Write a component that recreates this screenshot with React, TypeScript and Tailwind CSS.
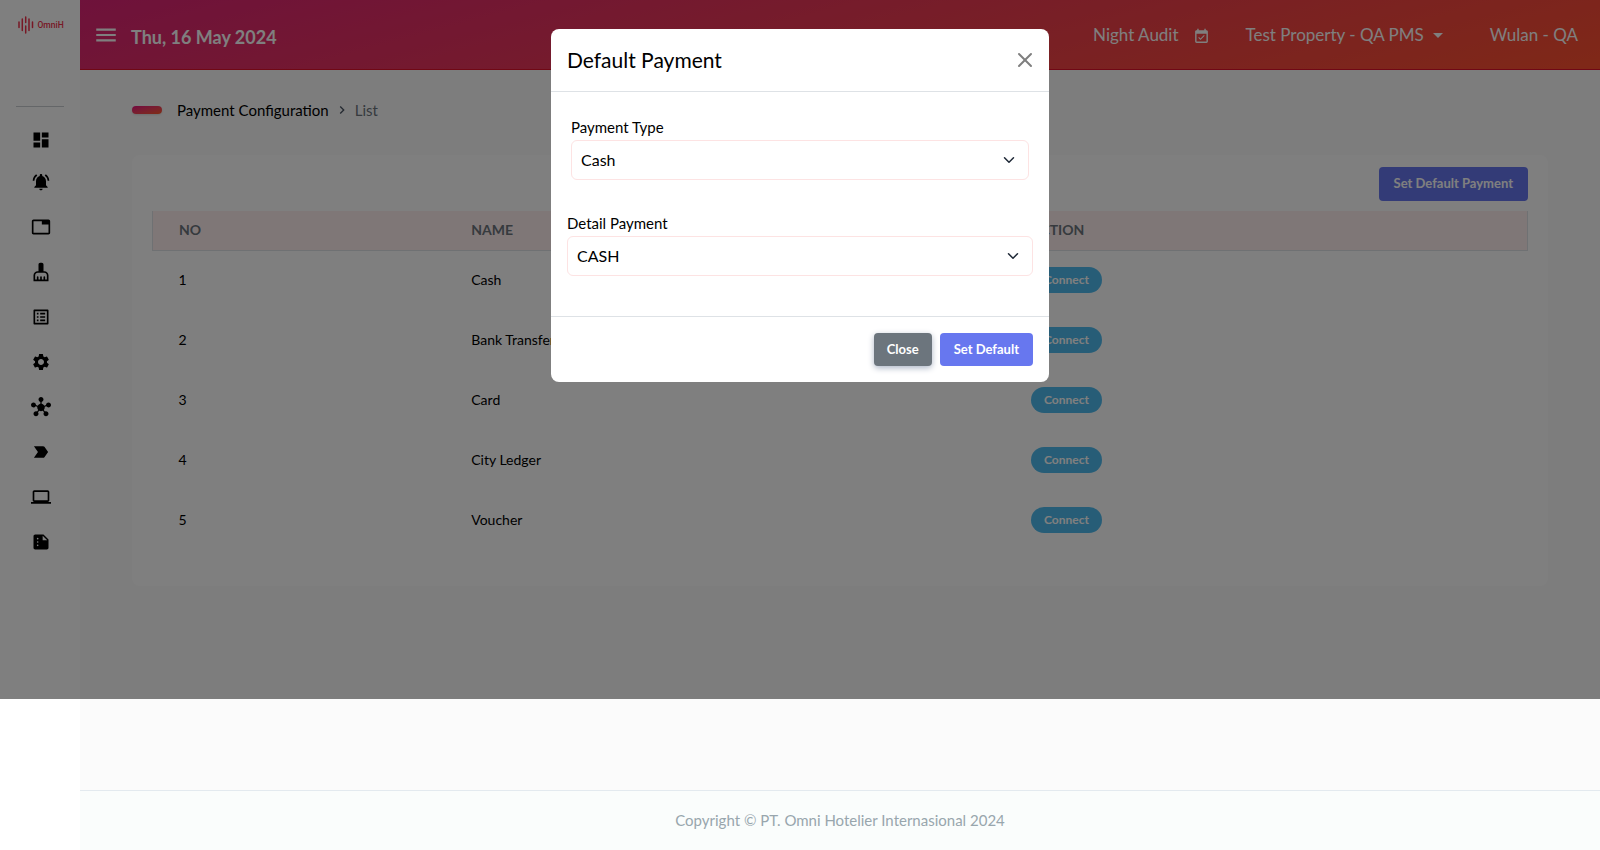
import { useState } from "react";
import { FiX } from "react-icons/fi";
import {
  MdArrowDropDown,
  MdChevronRight,
  MdCleaningServices,
  MdDashboard,
  MdEventAvailable,
  MdHub,
  MdLabelImportant,
  MdMenu,
  MdNotificationsActive,
  MdOutlineComputer,
  MdOutlineListAlt,
  MdOutlineTab,
  MdSettings,
  MdSummarize,
} from "react-icons/md";

const menuItems = [
  { label: "Dashboard", Icon: MdDashboard },
  { label: "Notifications", Icon: MdNotificationsActive },
  { label: "Front Office", Icon: MdOutlineTab },
  { label: "Housekeeping", Icon: MdCleaningServices },
  { label: "Reports", Icon: MdOutlineListAlt },
  { label: "Settings", Icon: MdSettings },
  { label: "Channels", Icon: MdHub },
  { label: "Labels", Icon: MdLabelImportant },
  { label: "System", Icon: MdOutlineComputer },
  { label: "Summary", Icon: MdSummarize },
];

const payments = ["Cash", "Bank Transfer", "Card", "City Ledger", "Voucher"];

const Logo = () => (
  <svg viewBox="0 0 48 18" className="h-[18px] w-12" role="img" aria-label="OmniH">
    <g stroke="#f0304a" strokeWidth="1.5" strokeLinecap="round">
      <path d="M3 6v5.500M6.300 3v11.500M9.700 1v5.500M9.700 10v7M13 3v11.500M16.500 6v5.500" />
    </g>
    <text x="21.500" y="12" fontSize="8.500" fontWeight="500" fill="#f0304a" fontFamily="Roboto, sans-serif">
      OmniH
    </text>
  </svg>
);

const Sidebar = () => (
  <aside className="flex w-20 shrink-0 flex-col items-center bg-white">
    <a href="#home" className="mt-4">
      <Logo />
    </a>
    <hr className="mt-[72px] w-12 border-[#c8cdd0]" />
    <nav className="mt-[23px] flex flex-col gap-[25px] pl-[2px]">
      {menuItems.map(({ label, Icon }) => (
        <a key={label} href="#menu" aria-label={label} className="text-black first:-mb-[3px]">
          <Icon className="size-5" />
        </a>
      ))}
    </nav>
  </aside>
);

const Header = () => (
  <header className="flex h-[70px] items-center border-b border-[#e0102a] bg-linear-[165deg,#dd2476,#ff512f] pr-[22px] pl-[13px] text-white">
    <button aria-label="Toggle menu">
      <MdMenu className="size-[26px]" />
    </button>
    <h1 className="ml-3 pt-1 text-lg font-bold">Thu, 16 May 2024</h1>
    <nav className="ml-auto flex items-center text-[17px]">
      <a href="#night-audit" className="flex items-center gap-[14px]">
        Night Audit
        <MdEventAvailable className="mt-1 size-[17px]" />
      </a>
      <button className="ml-9 flex items-center gap-[2px]">
        Test Property - QA PMS
        <MdArrowDropDown className="size-6" />
      </button>
      <a href="#profile" className="ml-10">
        Wulan - QA
      </a>
    </nav>
  </header>
);

const PaymentTable = () => (
  <section className="mt-[33px] rounded-lg bg-white px-5 pt-3 pb-9">
    <div className="flex justify-end">
      <button className="h-[34px] rounded bg-[#6777ef] px-[15px] text-[13px] font-bold text-white">
        Set Default Payment
      </button>
    </div>
    <table className="mt-[10px] w-full table-fixed text-sm text-black">
      <thead>
        <tr className="h-[39px] border border-t-0 border-[#dee2e6] bg-[#ffefef] text-left text-[#6c757d]">
          <th className="w-[21%] pl-[26px]">NO</th>
          <th className="w-[41%] pl-[30px]">NAME</th>
          <th className="pl-[26px]">ACTION</th>
        </tr>
      </thead>
      <tbody>
        {payments.map((name, i) => (
          <tr key={name} className="h-[60px]">
            <td className="pl-[26px]">{i + 1}</td>
            <td className="pl-[30px]">{name}</td>
            <td className="pl-[26px]">
              <button className="h-[26px] rounded-full bg-[#4fbbee] px-[13px] text-xs font-bold text-white">
                Connect
              </button>
            </td>
          </tr>
        ))}
      </tbody>
    </table>
  </section>
);

type SelectFieldProps = {
  id: string;
  label: string;
  options: string[];
};

const SelectField = ({ id, label, options }: SelectFieldProps) => {
  const [value, setValue] = useState(options[0]);

  return (
    <div className="flex flex-col">
      <label htmlFor={id} className="pb-[2px] text-[15px] leading-[22px]">
        {label}
      </label>
      <div className="relative">
        <select
          id={id}
          value={value}
          onChange={(e) => setValue(e.target.value)}
          className="h-10 w-full appearance-none rounded-md border border-[#fde3e3] bg-white px-[9px] text-base"
        >
          {options.map((option) => (
            <option key={option}>{option}</option>
          ))}
        </select>
        <svg viewBox="0 0 16 16" className="pointer-events-none absolute top-[14px] right-[14px] size-3" fill="none">
          <path d="m2 5 6 6 6-6" stroke="#1f2937" strokeWidth="2" strokeLinecap="round" strokeLinejoin="round" />
        </svg>
      </div>
    </div>
  );
};

const DefaultPaymentModal = ({ onClose }: { onClose: () => void }) => (
  <div className="absolute inset-x-0 top-0 h-[699px] bg-black/50">
    <div role="dialog" aria-label="Default Payment" className="mx-auto mt-[29px] w-[498px] rounded-lg bg-white text-black">
      <div className="flex h-[63px] items-center justify-between border-b border-[#dee2e6] px-4">
        <h2 className="text-[21px] leading-7">Default Payment</h2>
        <button aria-label="Close dialog" onClick={onClose} className="text-[#7f7f7f]">
          <FiX className="-mr-1 size-6" />
        </button>
      </div>
      <div className="flex flex-col gap-8 px-4 pt-6 pb-10">
        <div className="px-1">
          <SelectField id="payment-type" label="Payment Type" options={payments} />
        </div>
        <SelectField id="detail-payment" label="Detail Payment" options={["CASH"]} />
      </div>
      <div className="flex justify-end gap-2 border-t border-[#dee2e6] px-4 py-4 text-[13px] font-bold text-white">
        <button onClick={onClose} className="h-[33px] rounded bg-[#6c757d] px-[13px] shadow-[0_2px_6px_#acb5c6]">
          Close
        </button>
        <button className="h-[33px] rounded bg-[#6777ef] px-[14px]">Set Default</button>
      </div>
    </div>
  </div>
);

const App = () => {
  const [isModalOpen, setIsModalOpen] = useState(true);

  return (
    <div className="relative flex min-h-screen font-[Lato,sans-serif]">
      <Sidebar />
      <div className="flex min-w-0 grow flex-col bg-[#fbfbfb]">
        <Header />
        <main className="grow pt-7 pr-[52px] pl-[52px]">
          <nav aria-label="Breadcrumb" className="flex h-6 items-center text-[15px] text-black">
            <span className="mr-[15px] h-2 w-[30px] rounded-full bg-linear-to-br from-[#e6007e] to-[#ff5a1f] shadow-sm" />
            <a href="#payment">Payment Configuration</a>
            <MdChevronRight className="mx-[5px] size-4 text-[#4b5563]" />
            <span className="text-[#6c757d]">List</span>
          </nav>
          <PaymentTable />
        </main>
        <footer className="flex h-[60px] items-center justify-center border-t border-[#e3eaef] bg-[#fafdfc] text-[15px] text-[#98a6ad]">
          Copyright © PT. Omni Hotelier Internasional 2024
        </footer>
      </div>
      {isModalOpen && <DefaultPaymentModal onClose={() => setIsModalOpen(false)} />}
    </div>
  );
};

export default App;
